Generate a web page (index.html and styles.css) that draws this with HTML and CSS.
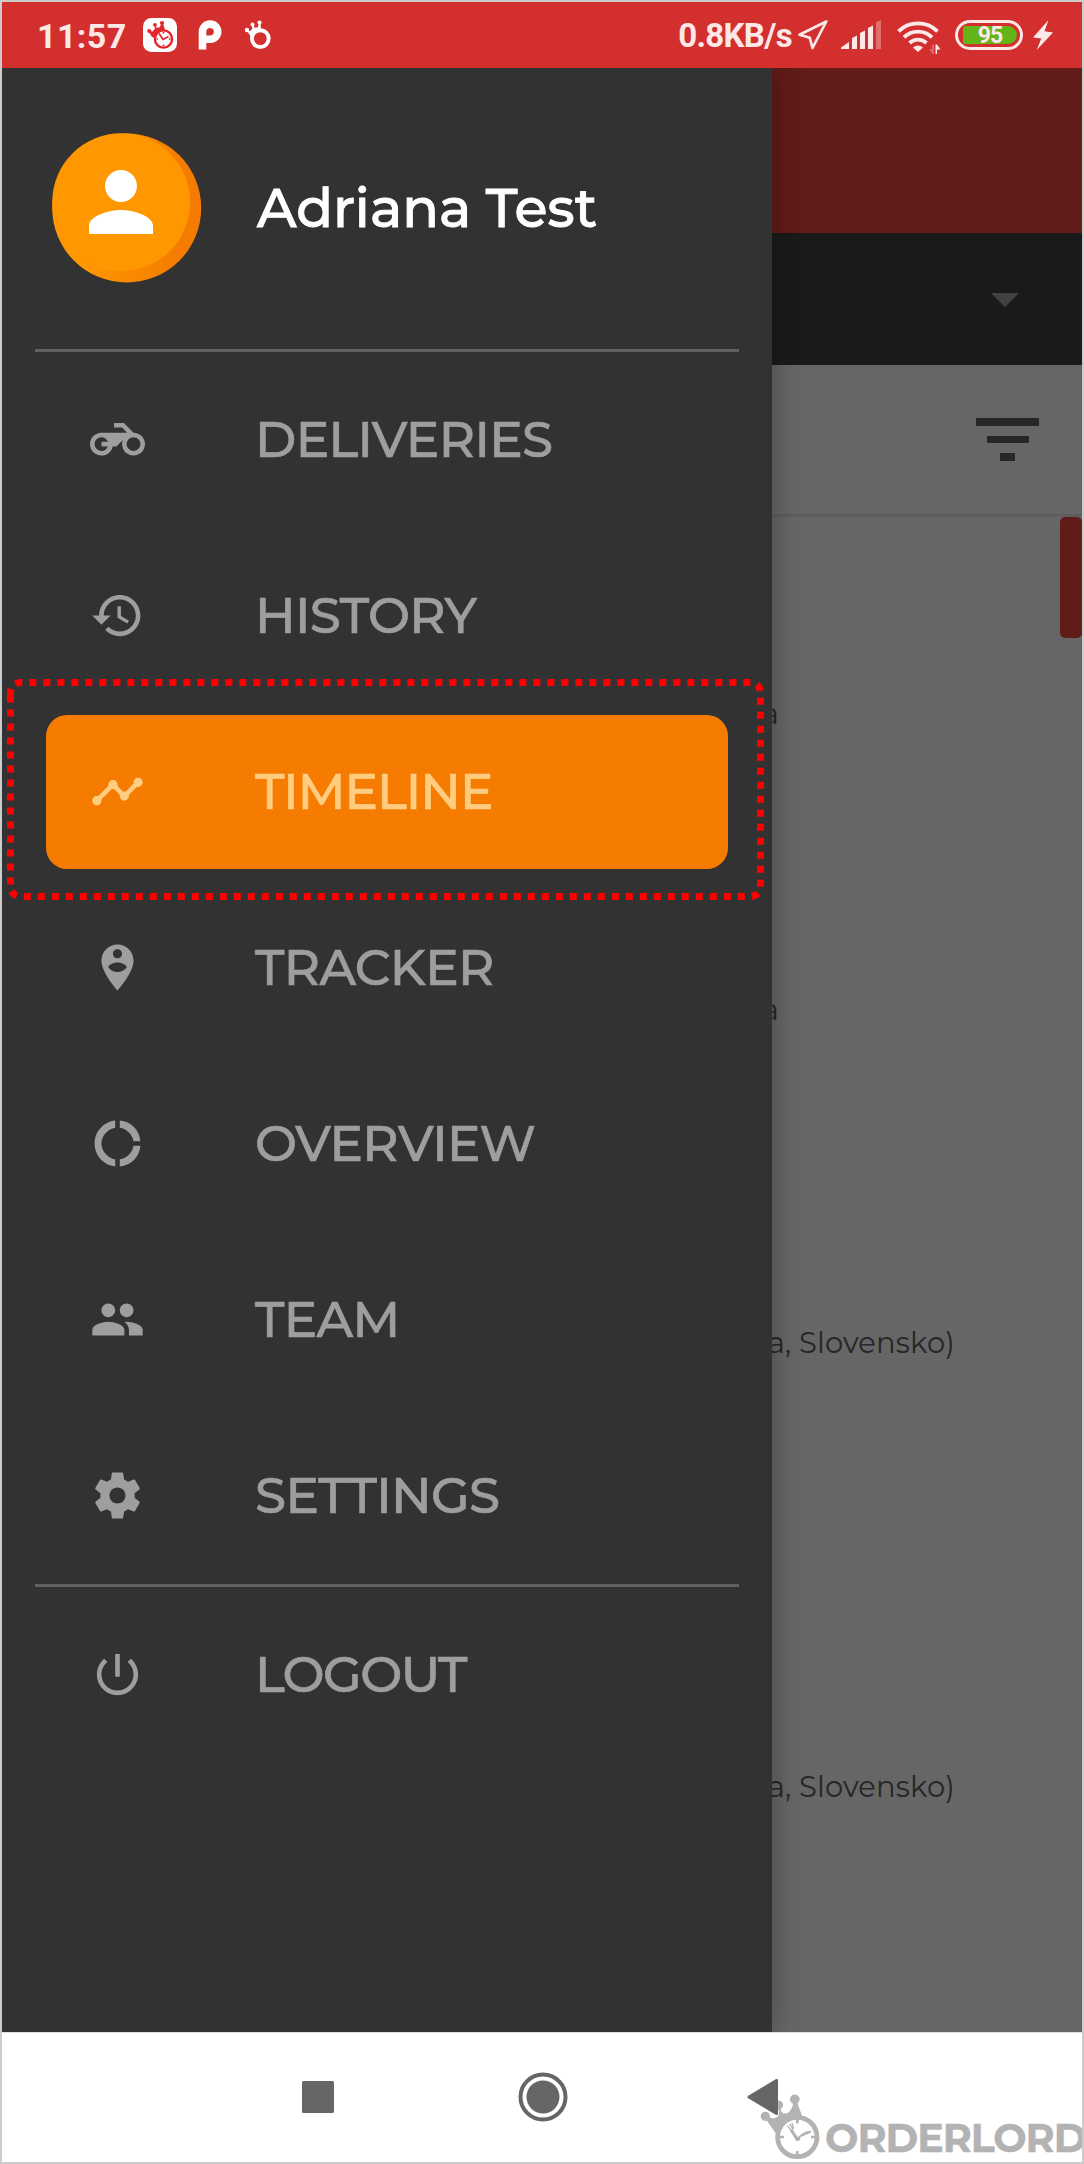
FILE: index.html
```
<!DOCTYPE html>
<html lang="en">
<head>
<meta charset="utf-8">
<title>Orderlord</title>
<link rel="stylesheet" href="styles.css">
</head>
<body>
<div class="phone">
  <header class="status">
    <span class="clock">11:57</span>
    <svg class="s-app" viewBox="0 0 34 34" width="34" height="34">
      <rect width="34" height="34" rx="8.5" fill="#fff"/>
      <g fill="#e5252c">
        <circle cx="6.3" cy="13" r="2.1"/><circle cx="12" cy="6.8" r="1.9"/><circle cx="19" cy="5" r="2.1"/>
        <path d="M5.500 13.500L9 19l2.500 1L22 11.500L19.800 5h-1.200l-1.800 4.200-3.500.6-1.200-3h-.8l.6 4-2.300 2.600z"/>
      </g>
      <circle cx="20.500" cy="21" r="8.600" fill="#fff" stroke="#e5252c" stroke-width="2.400"/>
      <path d="M16 15.500l4 6 5.500-3M20.500 14v1.500M20.500 26.500V28M13.500 21H15M26 21h1.500" fill="none" stroke="#e5252c" stroke-width="1.700"/>
    </svg>
    <svg class="s-p" viewBox="0 0 24 30" width="24" height="30">
      <path d="M4.500 29.500V12A7.600 7.600 0 1 1 12 19.300H8" fill="none" stroke="#fff" stroke-width="7.600"/>
    </svg>
    <svg class="s-crown" viewBox="0 0 28 30" width="28" height="30">
      <circle cx="16.300" cy="18.600" r="8.400" fill="none" stroke="#fff" stroke-width="3.900"/>
      <g fill="#fff">
        <circle cx="3" cy="10" r="2.200"/><circle cx="8.500" cy="4.500" r="2"/><circle cx="15.500" cy="2.600" r="2.100"/>
        <path d="M2.500 10.500L7 16.500l10-7L16.500 3h-1.200l-1.800 4.500-2.800.3L9 4H8l.3 5L6 11z"/>
      </g>
    </svg>
    <span class="spacer"></span>
    <span class="speed">0.8KB/s</span>
    <svg class="s-nav" viewBox="0 0 32 32" width="32" height="32">
      <path d="M29.300 2.500L2.500 15.700l10.300 3.100L15.500 29z" fill="none" stroke="#fde8e8" stroke-width="2.700" stroke-linejoin="round"/>
    </svg>
    <svg class="s-signal" viewBox="0 0 40 30" width="40" height="30" fill="#fde8e8">
      <path d="M0 29v-1.500L8 22v7zM11 18l5-2.500V29h-5zM19 13l5-2.500V29h-5zM27 8l5-2.500V29h-5z"/>
      <path d="M35 2.500L40 0v29h-5z" opacity=".35"/>
    </svg>
    <svg class="s-wifi" viewBox="0 0 44 34" width="44" height="34">
      <g fill="none" stroke="#fde8e8" stroke-width="3.800">
        <path d="M1.500 11.300a28 28 0 0 1 39 0"/><path d="M7 17.300a20 20 0 0 1 28 0"/><path d="M12.500 23a12.500 12.500 0 0 1 17 0"/>
      </g>
      <path d="M16 27.500q5-4 10 0l-5 4.500z" fill="#fde8e8"/>
      <path d="M38.500 34v-9.500h1.500l3.500 5H40V34z" fill="#fde8e8"/>
      <path d="M37 24.500V34h-1.500l-3.500-5h3v-4.500z" fill="#fde8e8" opacity=".3"/>
    </svg>
    <span class="battery"><span class="charge">95</span></span>
    <svg class="s-bolt" viewBox="0 0 20 30" width="20" height="30">
      <path d="M15.500 0L0 17.500l8.300 1L3.700 30 20 12.500 11.500 11.300z" fill="#fde8e8"/>
    </svg>
  </header>

  <main class="screen">
    <div class="page">
      <div class="appbar"></div>
      <div class="selector"><span class="caret"></span></div>
      <div class="filter">
        <span class="bar wide"></span><span class="bar mid"></span><span class="bar small"></span>
      </div>
      <div class="list">
        <span class="tag"></span>
        <p class="addr short r1">a</p>
        <p class="addr short r2">a</p>
        <p class="addr r3">a, Slovensko)</p>
        <p class="addr r4">a, Slovensko)</p>
      </div>
    </div>

    <aside class="drawer">
      <div class="profile">
        <svg class="avatar" viewBox="0 0 150 150" width="150" height="150">
          <defs><linearGradient id="rim"><stop offset=".2" stop-color="#ff9800"/><stop offset=".85" stop-color="#f57c00"/></linearGradient></defs>
          <circle cx="74.700" cy="75" r="74.500" fill="url(#rim)"/>
          <circle cx="69.200" cy="69.200" r="69" fill="#ff9800"/>
          <path transform="translate(21 21) scale(4)" d="M12 12c2.210 0 4-1.790 4-4s-1.790-4-4-4-4 1.790-4 4 1.790 4 4 4zm0 2c-2.670 0-8 1.340-8 4v2h16v-2c0-2.660-5.330-4-8-4z" fill="#fff"/>
        </svg>
        <h1 class="name">Adriana Test</h1>
      </div>
      <nav class="menu">
        <a class="item"><svg class="icon" viewBox="0 0 24 24"><path d="M19 9l-4.200-4.200h-4.300v2h3.500L16.200 9H5c-2.800 0-5 2.200-5 5s2.200 5 5 5c2.460 0 4.450-1.690 4.900-4h1.650l2.770-2.770c-.21.540-.32 1.140-.32 1.770 0 2.800 2.200 5 5 5s5-2.200 5-5-2.200-5-5-5zM7.820 15C7.400 16.150 6.280 17 5 17c-1.630 0-3-1.370-3-3s1.370-3 3-3c1.280 0 2.400.85 2.820 2H5v2h2.820zM19 17c-1.660 0-3-1.340-3-3s1.340-3 3-3 3 1.340 3 3-1.340 3-3 3z"/></svg><span>DELIVERIES</span></a>
        <a class="item"><svg class="icon" viewBox="0 0 24 24"><path d="M13 3c-4.970 0-9 4.030-9 9H1l3.890 3.890.07.14L9 12H6c0-3.870 3.130-7 7-7s7 3.130 7 7-3.130 7-7 7c-1.930 0-3.680-.79-4.940-2.060l-1.420 1.420C8.270 19.990 10.510 21 13 21c4.970 0 9-4.030 9-9s-4.030-9-9-9zm-1 5v5l4.280 2.540.72-1.210-3.500-2.080V8H12z"/></svg><span>HISTORY</span></a>
        <a class="item active"><svg class="icon" viewBox="0 0 24 24"><path d="M23 8c0 1.100-.9 2-2 2-.18 0-.35-.02-.51-.07l-3.560 3.550c.05.16.07.34.07.520 0 1.100-.9 2-2 2s-2-.9-2-2c0-.18.020-.36.070-.52l-2.550-2.550c-.16.050-.34.070-.52.070s-.36-.02-.52-.07l-4.550 4.560c.05.160.070.330.070.510 0 1.100-.9 2-2 2s-2-.9-2-2 .9-2 2-2c.18 0 .35.020.51.070l4.560-4.550C8.020 9.360 8 9.180 8 9c0-1.100.9-2 2-2s2 .9 2 2c0 .18-.02.36-.07.52l2.550 2.550c.16-.05.34-.07.52-.07s.36.020.52.070l3.550-3.560C19.020 8.350 19 8.180 19 8c0-1.100.9-2 2-2s2 .9 2 2z"/></svg><span>TIMELINE</span></a>
        <a class="item"><svg class="icon" viewBox="0 0 24 24"><path d="M12 2C8.140 2 5 5.140 5 9c0 5.250 7 13 7 13s7-7.750 7-13c0-3.860-3.140-7-7-7zm0 2c1.100 0 2 .9 2 2 0 1.110-.9 2-2 2s-2-.89-2-2c0-1.100.9-2 2-2zm0 10c-1.670 0-3.140-.85-4-2.150.02-1.320 2.670-2.050 4-2.050s3.980.73 4 2.050c-.86 1.300-2.330 2.150-4 2.150z"/></svg><span>TRACKER</span></a>
        <a class="item"><svg class="icon" viewBox="0 0 24 24"><path d="M11 5.080V2C6 2.500 2 6.810 2 12s4 9.500 9 10v-3.080c-3-.48-6-3.400-6-6.920s3-6.440 6-6.920zM18.970 11H22c-.47-5-4-8.530-9-9v3.080C16 5.510 18.540 8 18.970 11zM13 18.920V22c5-.47 8.530-4 9-9h-3.030c-.43 3-2.970 5.490-5.970 5.920z"/></svg><span>OVERVIEW</span></a>
        <a class="item"><svg class="icon" viewBox="0 0 24 24"><path d="M16 11c1.660 0 2.990-1.340 2.990-3S17.660 5 16 5c-1.660 0-3 1.340-3 3s1.340 3 3 3zm-8 0c1.660 0 2.990-1.340 2.990-3S9.660 5 8 5C6.340 5 5 6.340 5 8s1.340 3 3 3zm0 2c-2.330 0-7 1.170-7 3.500V19h14v-2.500c0-2.330-4.670-3.500-7-3.500zm8 0c-.29 0-.62.020-.97.050 1.160.84 1.970 1.970 1.970 3.450V19h6v-2.500c0-2.330-4.670-3.500-7-3.500z"/></svg><span>TEAM</span></a>
        <a class="item"><svg class="icon" viewBox="0 0 24 24"><path d="M19.430 12.980c.04-.32.070-.64.070-.98s-.03-.66-.07-.98l2.110-1.650c.19-.15.24-.42.120-.64l-2-3.460c-.12-.22-.39-.3-.61-.22l-2.490 1c-.52-.4-1.080-.73-1.690-.98l-.38-2.650C14.460 2.180 14.250 2 14 2h-4c-.25 0-.46.180-.49.420l-.38 2.650c-.61.250-1.170.590-1.690.980l-2.490-1c-.23-.09-.49 0-.61.220l-2 3.460c-.13.220-.07.490.120.640l2.110 1.650c-.04.320-.07.650-.07.980s.03.660.070.980l-2.110 1.650c-.19.150-.24.420-.12.640l2 3.460c.12.220.39.300.61.220l2.490-1c.52.400 1.080.730 1.690.980l.38 2.650c.03.240.240.420.490.420h4c.25 0 .46-.18.49-.42l.38-2.650c.61-.25 1.170-.59 1.690-.98l2.490 1c.23.090.49 0 .61-.22l2-3.460c.12-.22.070-.49-.12-.64l-2.110-1.650zM12 15.500c-1.930 0-3.500-1.570-3.500-3.500s1.570-3.500 3.500-3.500 3.500 1.570 3.500 3.500-1.570 3.500-3.500 3.500z"/></svg><span>SETTINGS</span></a>
      </nav>
      <div class="menu last">
        <a class="item"><svg class="icon" viewBox="0 0 24 24"><path d="M13 3h-2v10h2V3zm4.830 2.170l-1.420 1.420C17.990 7.860 19 9.810 19 12c0 3.870-3.130 7-7 7s-7-3.130-7-7c0-2.190 1.010-4.140 2.580-5.420L6.170 5.170C4.230 6.820 3 9.260 3 12c0 4.970 4.030 9 9 9s9-4.030 9-9c0-2.740-1.230-5.180-3.170-6.830z"/></svg><span>LOGOUT</span></a>
      </div>
    </aside>

    <svg class="marker" viewBox="0 0 772 240" width="772" height="240">
      <path d="M10.500 28V24.500a10 10 0 0 1 10-10H750.500a10 10 0 0 1 10 10V218.500a10 10 0 0 1-10 10H20.500a10 10 0 0 1-10-10z" fill="none" stroke="#f00" stroke-width="7" stroke-dasharray="7 7"/>
    </svg>
  </main>

  <footer class="navbar">
    <svg width="32" height="32" viewBox="0 0 32 32"><rect width="32" height="32" rx="1.500" fill="#666"/></svg>
    <svg width="50" height="50" viewBox="0 0 50 50"><circle cx="25" cy="25" r="22.500" fill="none" stroke="#666" stroke-width="4"/><circle cx="25" cy="25" r="16.500" fill="#666"/></svg>
    <svg width="32" height="36" viewBox="0 0 32 36"><path d="M29.500 1.500V34.500L2 18z" fill="#666" stroke="#666" stroke-width="3" stroke-linejoin="round"/></svg>
  </footer>

  <div class="brand">
    <svg viewBox="0 0 62 68" width="62" height="68">
      <g fill="#b3b3b3">
        <circle cx="5.300" cy="22.300" r="4.600"/><circle cx="19" cy="11" r="4.200"/><circle cx="34.800" cy="5.300" r="4.800"/>
        <path d="M5 24l12 17C20 31 30 22 42.500 23L37 8h-3.500c-1 6-3.500 10.500-7.500 11.500-3.500.5-5.500-2-5.500-6h-2.500c2 5.500 1 9.500-3 10.500-3 .8-5.500-.3-8-2.500z"/>
      </g>
      <circle cx="37.300" cy="43" r="19.700" fill="#fff" stroke="#b3b3b3" stroke-width="4.800"/>
      <g fill="none" stroke="#b3b3b3">
        <path d="M37.300 25v4.500M37.300 57v4.500M19.500 43H24M51 43h4.500" stroke-width="2.600"/>
        <path d="M31 35.500l6.300 10" stroke-width="3.200"/>
        <path d="M27.500 31.500l3.500 5M29.700 30l3 5M32 29l1.500 6" stroke-width="1.300"/>
      </g>
      <path d="M35 42.500c1.500 1 3 .8 4.500-.5 3-3.500 7-5.500 12.500-5.200-1.500 3-6 4-11.500 6.200 0 3.500-2 4.500-4.500 4z" fill="#b3b3b3"/>
    </svg>
    <span>ORDERLORD</span>
  </div>
</div>
</body>
</html>
```
FILE: styles.css
```
* { box-sizing: border-box; }

body {
  margin: 0;
  font-family: Montserrat, "Open Sans", sans-serif;
}

.phone {
  position: relative;
  display: flex;
  flex-direction: column;
  width: 1084px;
  height: 2164px;
  border: 2px solid #ccc;
  background: #fff;
  overflow: hidden;
}

/* Status bar */
.status {
  display: flex;
  align-items: center;
  flex: none;
  height: 66px;
  padding: 0 29px 0 35px;
  background: #d32f2f;
  color: #fde8e8;
  font-family: Roboto, sans-serif;
  font-weight: 700;
}
.clock { width: 106px; margin-top: 1px; font-size: 34px; letter-spacing: 0.4px; }
.s-app { margin-right: 21px; }
.s-p { margin-right: 22px; }
.spacer { flex: 1; }
.speed { margin: 1px 5px 0 0; font-size: 33px; letter-spacing: -0.7px; }
.s-nav { margin-right: 12px; }
.s-signal { margin-right: 16px; }
.s-wifi { margin: 3px 14px 0 0; }
.s-bolt { margin-left: 10px; }
.battery {
  width: 68px;
  height: 30px;
  padding: 3px 3px 3px 5px;
  border: 3px solid #fde8e8;
  border-radius: 15px;
}
.charge {
  display: flex;
  align-items: center;
  justify-content: center;
  width: 54px;
  height: 18px;
  border-radius: 2px 9px 9px 2px;
  background: #62b419;
  font-size: 23px;
  letter-spacing: -1px;
}

/* Page behind the drawer */
.screen {
  position: relative;
  flex: none;
  height: 1964px;
  background: #666;
  overflow: hidden;
}
.page { display: flex; flex-direction: column; height: 100%; }
.appbar { height: 165px; background: #611b18; }
.selector {
  display: flex;
  align-items: center;
  justify-content: flex-end;
  height: 132px;
  padding: 1px 63px 0 0;
  background: #1a1a1a;
}
.caret {
  border: 14px solid transparent;
  border-top-color: #424242;
  border-bottom: 0;
}
.filter {
  display: flex;
  flex-direction: column;
  align-items: center;
  gap: 10px;
  height: 152px;
  padding: 53px 43px 0 974px;
  border-bottom: 3px solid #5e5e5e;
}
.bar { height: 7.5px; background: #272727; }
.wide { width: 63px; }
.mid { width: 42px; }
.small { width: 15px; }
.list { display: flow-root; color: #262626; }
.tag {
  float: right;
  width: 22px;
  height: 121px;
  border-radius: 5px;
  background: #611b18;
}
.addr {
  width: 953px;
  margin: 0;
  font-size: 29px;
  line-height: 36px;
  letter-spacing: 0.15px;
  text-align: right;
}
.short { width: 777px; }
.r1 { margin-top: 179px; }
.r2 { margin-top: 260px; }
.r3 { margin-top: 297px; }
.r4 { margin-top: 408px; }

/* Drawer */
.drawer {
  position: absolute;
  inset: 0 auto 0 0;
  width: 770px;
  padding: 0 33px;
  background: #323232;
  box-shadow: 0 0 28px rgba(0, 0, 0, .3);
}
.profile {
  display: flex;
  align-items: center;
  gap: 55px;
  height: 284px;
  padding: 0 0 1px 17px;
  border-bottom: 3px solid #616161;
}
.name {
  margin: 0;
  color: #fff;
  font-size: 54px;
  font-weight: 500;
  line-height: 66px;
  -webkit-text-stroke: 0.9px currentColor;
}
.menu {
  display: flex;
  flex-direction: column;
  gap: 22px;
  padding: 10px 11px 0;
  height: 1235px;
  border-bottom: 3px solid #616161;
}
.item {
  display: flex;
  align-items: center;
  flex: none;
  height: 154px;
  padding-left: 44px;
  border-radius: 21px;
  color: #9e9e9e;
  font-size: 50px;
  font-weight: 500;
  letter-spacing: -0.65px;
  -webkit-text-stroke: 0.7px currentColor;
}
.icon {
  width: 55px;
  height: 55px;
  margin-right: 110px;
  fill: currentColor;
  stroke: none;
}
.active {
  margin: 1px 0 -1px;
  padding-bottom: 1px;
  background: #f57c00;
  color: #ffcc80;
  letter-spacing: -1px;
}
.last { height: auto; border: 0; }
.last .item { letter-spacing: -1.5px; }

/* Dotted highlight laid over the drawer */
.marker { position: absolute; left: -2px; top: 600px; }

/* System navigation, stacked above the watermark */
.navbar {
  position: relative;
  z-index: 1;
  display: flex;
  align-items: center;
  flex: none;
  height: 130px;
  padding: 0 0 1px 300px;
  border-top: 1px solid #e0e0e0;
}
.navbar svg:nth-child(2) { margin: 0 179px 0 183.500px; }

/* Watermark */
.brand {
  position: absolute;
  left: 758px;
  top: 2092px;
  display: flex;
  align-items: flex-start;
  color: #b3b3b3;
  font-size: 39.5px;
  font-weight: 700;
  letter-spacing: -0.95px;
  line-height: 48px;
  white-space: nowrap;
  -webkit-text-stroke: 0.5px currentColor;
}
.brand span { margin: 20px 0 0 3px; }
```
